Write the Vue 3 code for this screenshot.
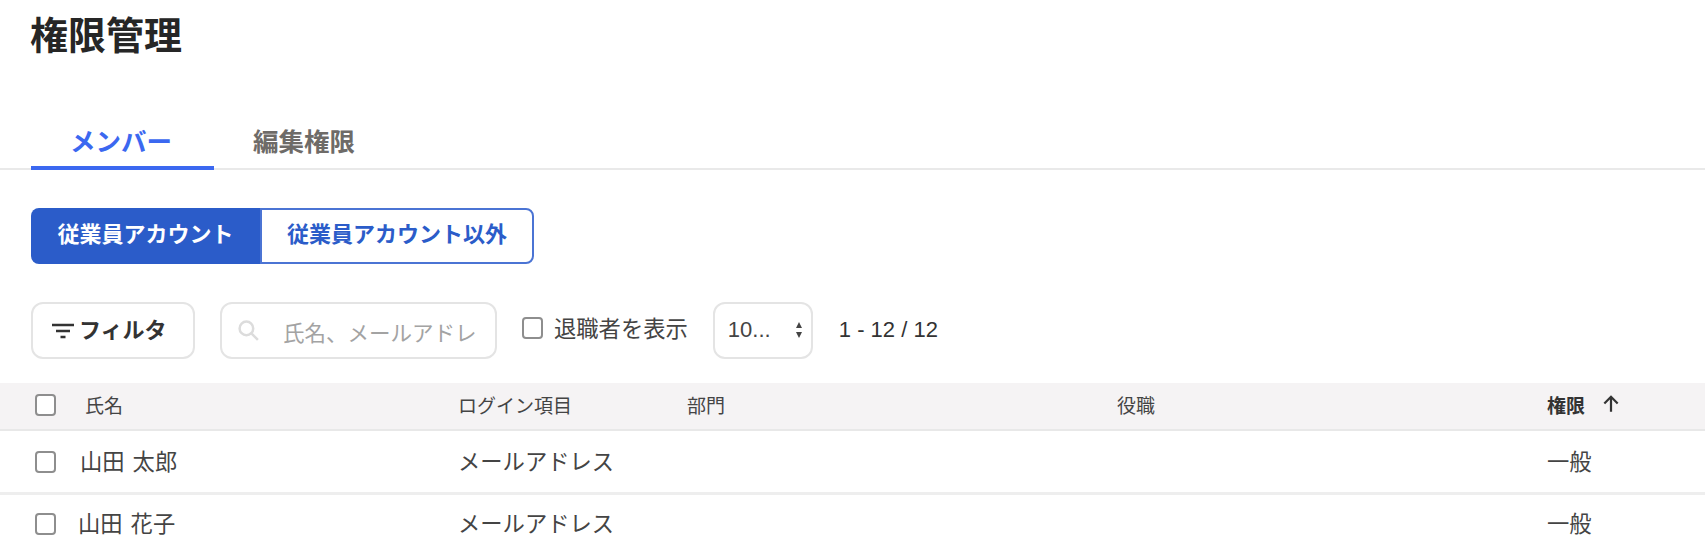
<script setup>
const rows = [
  { name: '山田 太郎', gap: 'gap-a', login: 'メールアドレス', role: '一般' },
  { name: '山田 花子', gap: 'gap-b', login: 'メールアドレス', role: '一般' },
]
</script>

<template>
  <div class="page">
    <h1 class="title">権限管理</h1>

    <nav class="tabs">
      <div class="tab active">メンバー</div>
      <div class="tab">編集権限</div>
    </nav>

    <div class="segment">
      <div class="seg seg-on">従業員アカウント</div>
      <div class="seg seg-off">従業員アカウント以外</div>
    </div>

    <div class="toolbar">
      <button class="filter">
        <svg class="filter-icon" width="24" height="18" viewBox="0 0 24 18" fill="none" stroke="#333" stroke-width="2.400">
          <path d="M1 3h22M5 9h14M9.500 15h5" />
        </svg>
        <span class="filter-label">フィルタ</span>
      </button>
      <div class="search">
        <svg width="23" height="23" viewBox="0 0 22 22" fill="none" stroke="#dcdcdc" stroke-width="2.400">
          <circle cx="9" cy="9" r="6.500" />
          <path d="M14 14l6 6" />
        </svg>
        <span class="placeholder">氏名、メールアドレ</span>
      </div>
      <label class="retired">
        <span class="check"></span>
        <span class="retired-label">退職者を表示</span>
      </label>
      <div class="select">
        <span>10...</span>
        <svg width="8" height="20" viewBox="0 0 8 20" fill="#444">
          <path d="M4 2l3 6H1zM4 18l-3-6h6z" />
        </svg>
      </div>
      <div class="count">1 - 12 / 12</div>
    </div>

    <div class="table">
      <div class="row head">
        <div class="cell first head-first"><span class="check"></span><span>氏名</span></div>
        <div class="cell">ログイン項目</div>
        <div class="cell">部門</div>
        <div class="cell">役職</div>
        <div class="cell sorted">
          <span>権限</span>
          <svg width="20" height="20" viewBox="0 0 18 18" fill="none" stroke="#333" stroke-width="2">
            <path d="M9 16V2.500M3 8.500L9 2.500 15 8.500" />
          </svg>
        </div>
      </div>
      <div v-for="r in rows" :key="r.name" class="row body">
        <div class="cell first" :class="r.gap"><span class="check"></span><span class="name">{{ r.name }}</span></div>
        <div class="cell">{{ r.login }}</div>
        <div class="cell"></div>
        <div class="cell"></div>
        <div class="cell">{{ r.role }}</div>
      </div>
    </div>
  </div>
</template>

<style>
html, body { margin: 0; background: #fff; overflow: hidden; }
</style>

<style scoped>
.page {
  width: 1705px;
  height: 550px;
  overflow: hidden;
  font-family: "Noto Sans CJK JP", "Liberation Sans", sans-serif;
  color: #444;
  background: #fff;
}
.title {
  margin: 0;
  padding: 7px 0 0 30px;
  height: 102px;
  box-sizing: border-box;
  font-size: 38px;
  line-height: 52px;
  font-weight: 700;
  color: #262626;
}
.tabs {
  display: flex;
  height: 68px;
  box-sizing: border-box;
  padding-left: 31px;
  border-bottom: 2px solid #e9e9e9;
}
.tab {
  width: 183px;
  margin-bottom: -2px;
  padding: 8px 3px 0 0;
  box-sizing: border-box;
  text-align: center;
  font-size: 25.500px;
  font-weight: 700;
  line-height: 60px;
  color: #6e6b68;
}
.tab + .tab { width: 180px; padding-right: 0; }
.tab.active {
  color: #3b68f0;
  height: 68px;
  border-bottom: 4px solid #3b68f0;
}
.segment {
  display: flex;
  width: 503px;
  height: 56px;
  margin: 38px 0 0 31px;
  font-size: 22px;
  font-weight: 700;
}
.seg {
  display: flex;
  align-items: center;
  justify-content: center;
  box-sizing: border-box;
  padding-bottom: 8px;
}
.seg-on {
  width: 229px;
  background: #2b5cc9;
  border-radius: 8px 0 0 8px;
  color: #fff;
}
.seg-off {
  flex: 1;
  color: #2b5cc9;
  border: 2px solid #4b74d4;
  border-radius: 0 8px 8px 0;
}
.toolbar {
  display: flex;
  align-items: center;
  height: 58px;
  margin: 37px 0 0 31px;
}
.filter {
  display: flex;
  align-items: center;
  gap: 4px;
  width: 164px;
  height: 57px;
  box-sizing: border-box;
  padding: 0 0 0 18px;
  background: #fff;
  border: 2px solid #e4e4e4;
  border-radius: 12px;
  font: 700 22px "Noto Sans CJK JP", sans-serif;
  color: #333;
}
.filter-icon { margin-top: 2px; }
.filter-label { margin-bottom: 4px; }
.search {
  display: flex;
  align-items: center;
  width: 277px;
  height: 57px;
  box-sizing: border-box;
  margin-left: 25px;
  padding-left: 15px;
  border: 2px solid #e4e4e4;
  border-radius: 12px;
}
.placeholder {
  margin: 2px 0 0 23px;
  font-size: 21.500px;
  color: #a3a3a3;
  white-space: nowrap;
}
.retired {
  display: flex;
  align-items: center;
  gap: 11px;
  margin-left: 25px;
  font-size: 22.300px;
  color: #444;
}
.retired .check { margin-top: -4px; }
.retired-label { margin-bottom: 6px; }
.check {
  flex: none;
  display: block;
  width: 21px;
  height: 22px;
  box-sizing: border-box;
  border: 2px solid #8e8e8e;
  border-radius: 4px;
  background: #fff;
}
.select {
  display: flex;
  align-items: center;
  justify-content: space-between;
  width: 100px;
  height: 57px;
  box-sizing: border-box;
  margin-left: 25px;
  padding: 0 8px 0 13px;
  border: 2px solid #e4e4e4;
  border-radius: 12px;
  font: 22px "Liberation Sans", sans-serif;
}
.count {
  margin-left: 26px;
  font: 22px "Liberation Sans", sans-serif;
  color: #333;
}
.table { margin-top: 24px; }
.row {
  display: grid;
  grid-template-columns: 458px 229px 430px 430px 1fr;
  align-items: center;
  box-sizing: border-box;
}
.head {
  height: 48px;
  padding-bottom: 4px;
  background: #f5f3f4;
  border-bottom: 2px solid #e8e8e8;
  font-size: 19px;
  color: #444;
}
.head .check { margin-top: 2px; }
.body {
  height: 64px;
  padding-bottom: 3px;
  border-bottom: 3px solid #eeeeee;
  font-size: 22.300px;
}
.body + .body { padding-bottom: 7px; }
.body .check { margin-top: 3px; }
.name { word-spacing: 3px; }
.cell {
  display: flex;
  align-items: center;
  min-width: 0;
}
.first { padding-left: 35px; }
.head-first { gap: 29px; }
.gap-a { gap: 24px; }
.gap-b { gap: 22px; }
.sorted {
  gap: 16px;
  font-weight: 700;
  color: #333;
}
</style>
